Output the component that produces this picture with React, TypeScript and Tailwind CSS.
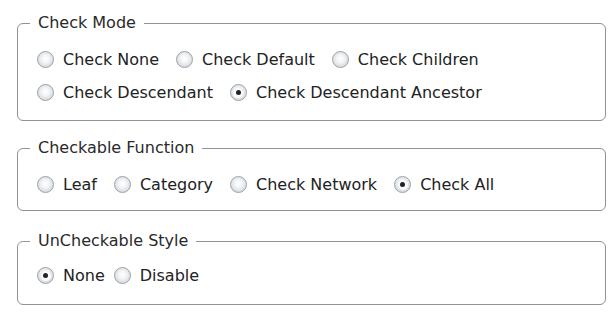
import React from "react";

function Radio({ label, checked }: { label: string; checked?: boolean }) {
  return (
    <div className="flex items-center h-[33px]">
      <span className="w-[17px] h-[17px] rounded-full border border-[#9ca2a8] bg-[radial-gradient(circle_at_50%_45%,#ffffff_0%,#f2f4f6_35%,#d6dade_75%,#bcc2c8_100%)] flex items-center justify-center">
        {checked && (
          <span className="w-[10px] h-[10px] rounded-full bg-[#fafafa] flex items-center justify-center">
            <span className="w-[5px] h-[5px] rounded-full bg-[#1f2327]" />
          </span>
        )}
      </span>
      <span className="ml-[9px] text-[16px] text-[#222222] leading-none">{label}</span>
    </div>
  );
}

function Group({
  title,
  rows,
  gap,
  className,
}: {
  title: string;
  rows: { label: string; checked?: boolean }[][];
  gap: string;
  className?: string;
}) {
  return (
    <fieldset
      className={
        "border border-[#8c9399] rounded-[6px] ml-[17px] w-[589px] pl-[19px] " +
        (className ?? "")
      }
    >
      <legend className="-ml-[7px] px-[8px] text-[16px] leading-[20px] text-[#2a2a2a]">{title}</legend>
      {rows.map((row, i) => (
        <div key={i} className={"flex " + gap}>
          {row.map((r) => (
            <Radio key={r.label} label={r.label} checked={r.checked} />
          ))}
        </div>
      ))}
    </fieldset>
  );
}

export default function App() {
  return (
    <div
      className="w-[609px] h-[315px] bg-white pt-[13px]"
      style={{ fontFamily: '"DejaVu Sans", Verdana, sans-serif' }}
    >
      <Group
        title="Check Mode"
        gap="gap-x-[17px]"
        className="pt-[10px] pb-[11px]"
        rows={[
          [{ label: "Check None" }, { label: "Check Default" }, { label: "Check Children" }],
          [{ label: "Check Descendant" }, { label: "Check Descendant Ancestor", checked: true }],
        ]}
      />
      <Group
        title="Checkable Function"
        gap="gap-x-[17px]"
        className="mt-[17px] pt-[10px] pb-[9px]"
        rows={[
          [
            { label: "Leaf" },
            { label: "Category" },
            { label: "Check Network" },
            { label: "Check All", checked: true },
          ],
        ]}
      />
      <Group
        title="UnCheckable Style"
        gap="gap-x-[9px]"
        className="mt-[20px] pt-[8px] pb-[12px]"
        rows={[[{ label: "None", checked: true }, { label: "Disable" }]]}
      />
    </div>
  );
}
